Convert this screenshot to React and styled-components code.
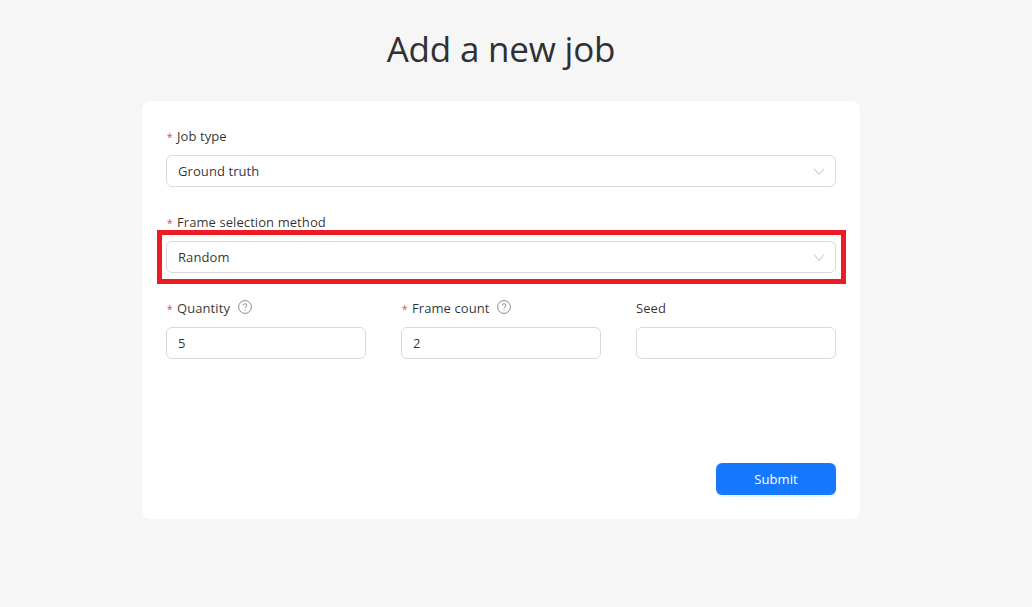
import React from 'react';
import styled, { createGlobalStyle } from 'styled-components';

const Global = createGlobalStyle`
  html, body { margin: 0; padding: 0; background: #f6f6f6; }
  body { font-family: "Open Sans", "Noto Sans", "Liberation Sans", sans-serif; }
`;

const Page = styled.div`
  width: 1002px;
  height: 607px;
  overflow: hidden;
  display: flex;
  flex-direction: column;
  align-items: center;
`;

const Title = styled.h1`
  margin: 23px 0 0;
  height: 52px;
  line-height: 52px;
  font-size: 35px;
  font-weight: 400;
  letter-spacing: -0.2px;
  color: #2e3033;
  text-align: center;
`;

const Card = styled.form`
  width: 718px;
  height: 418px;
  box-sizing: border-box;
  margin-top: 26px;
  padding: 24px;
  background: #fff;
  border-radius: 8px;
  box-shadow: 0 0 1px rgba(0, 0, 0, 0.06);
  display: flex;
  flex-direction: column;
`;

const Item = styled.div`
  display: flex;
  flex-direction: column;
  margin-bottom: ${(p) => (p.$last ? '0' : '24px')};
  min-width: 0;
`;

const Label = styled.label`
  height: 22px;
  line-height: 22px;
  margin-bottom: 8px;
  font-size: 13px;
  letter-spacing: 0.08px;
  color: rgba(0, 0, 0, 0.82);
  display: flex;
  align-items: center;
  white-space: nowrap;
`;

const Star = styled.span`
  color: #e8505b;
  font-size: 14px;
  width: 11px;
  padding: 4px 0 0 1px;
  box-sizing: border-box;
  font-family: "Liberation Sans", sans-serif;
`;

const Help = styled.svg`
  width: 14px;
  height: 14px;
  margin-left: 8px;
  margin-top: -2px;
  color: rgba(0, 0, 0, 0.45);
`;

const Highlighted = styled.div`
  position: relative;
`;

const RedBox = styled.div`
  position: absolute;
  left: -9px;
  right: -10px;
  top: -11px;
  bottom: -11px;
  border: 5px solid #ed1c24;
  pointer-events: none;
`;

const Field = styled.div`
  height: 32px;
  box-sizing: border-box;
  border: 1px solid #d9d9d9;
  border-radius: 6px;
  background: #fff;
  padding: 0 10px 0 11px;
  display: flex;
  align-items: center;
  justify-content: space-between;
  font-size: 13px;
  letter-spacing: 0.08px;
  color: rgba(0, 0, 0, 0.82);
`;

const Chevron = styled.svg`
  width: 12px;
  height: 12px;
  color: rgba(0, 0, 0, 0.25);
`;

const Row = styled.div`
  display: grid;
  grid-template-columns: repeat(3, 200px);
  column-gap: 35px;
`;

const Footer = styled.div`
  margin-top: auto;
  display: flex;
  justify-content: flex-end;
`;

const Submit = styled.button`
  width: 120px;
  height: 32px;
  border: 0;
  border-radius: 6px;
  background: #1677ff;
  color: #fff;
  font-family: inherit;
  font-size: 13px;
  letter-spacing: 0.08px;
  box-shadow: 0 2px 0 rgba(5, 145, 255, 0.1);
`;

const HelpIcon = () => (
  <Help viewBox="0 0 14 14" fill="none" stroke="currentColor">
    <circle cx="7" cy="7" r="6.4" strokeWidth="1" />
    <path d="M5.2 5.5c0-1 .8-1.7 1.8-1.7s1.8.7 1.8 1.6c0 1.4-1.8 1.4-1.8 2.8" strokeWidth="1" />
    <circle cx="7" cy="10" r=".6" fill="currentColor" stroke="none" />
  </Help>
);

const ChevronIcon = () => (
  <Chevron viewBox="0 0 12 12" fill="none" stroke="currentColor" strokeWidth="1">
    <path d="M1 3.5l5 6 5-6" />
  </Chevron>
);

const FormLabel = ({ required, help, children }) => (
  <Label>
    {required && <Star>*</Star>}
    {children}
    {help && <HelpIcon />}
  </Label>
);

export default function App() {
  return (
    <Page>
      <Global />
      <Title>Add a new job</Title>
      <Card>
        <Item>
          <FormLabel required>Job type</FormLabel>
          <Field>
            Ground truth
            <ChevronIcon />
          </Field>
        </Item>
        <Item>
          <FormLabel required>Frame selection method</FormLabel>
          <Highlighted>
            <Field>
              Random
              <ChevronIcon />
            </Field>
            <RedBox />
          </Highlighted>
        </Item>
        <Row>
          <Item $last>
            <FormLabel required help>Quantity</FormLabel>
            <Field>5</Field>
          </Item>
          <Item $last>
            <FormLabel required help>Frame count</FormLabel>
            <Field>2</Field>
          </Item>
          <Item $last>
            <FormLabel>Seed</FormLabel>
            <Field />
          </Item>
        </Row>
        <Footer>
          <Submit type="button">Submit</Submit>
        </Footer>
      </Card>
    </Page>
  );
}
